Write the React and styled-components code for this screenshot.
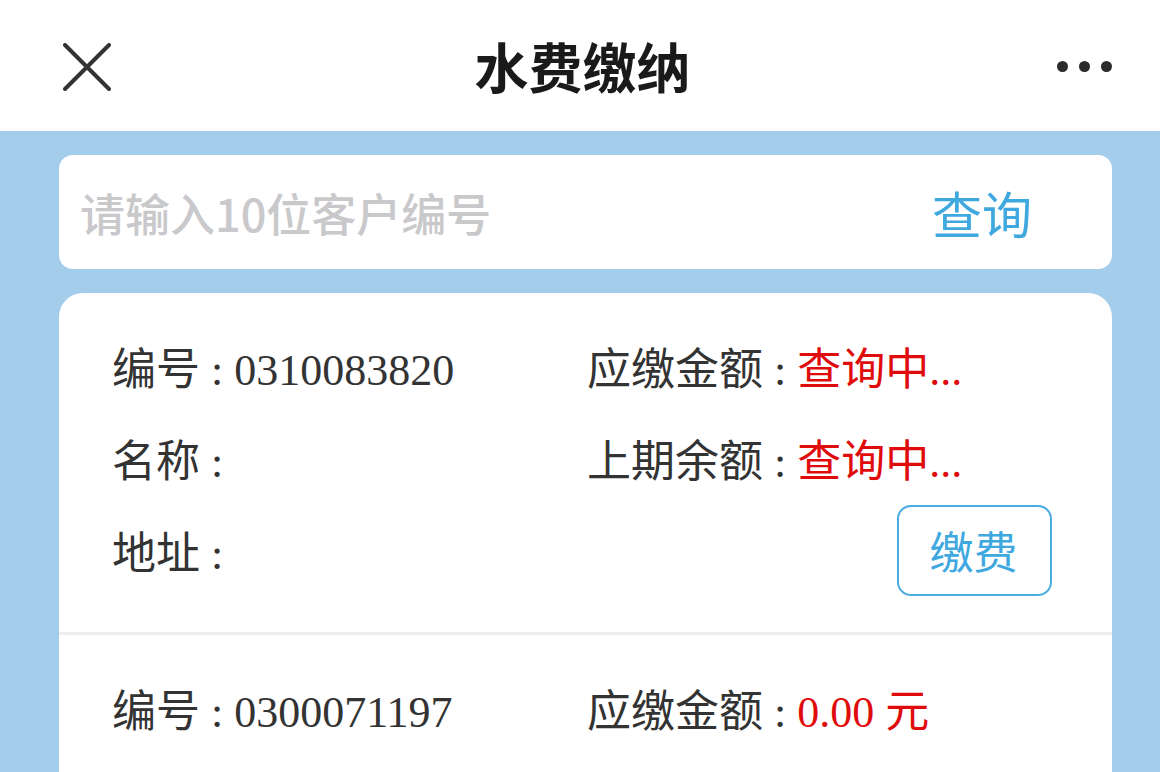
import React from 'react';
import styled, { createGlobalStyle } from 'styled-components';

const GlobalStyle = createGlobalStyle`
  html, body {
    margin: 0;
    padding: 0;
    height: 100%;
    overflow: hidden;
    background: #a4cceb;
  }
  body {
    font-family: "Noto Sans CJK SC", "Noto Sans", sans-serif;
  }
`;

const Page = styled.div`
  width: 1160px;
  height: 772px;
  overflow: hidden;
  background: #a4cceb;
`;

const Header = styled.header`
  height: 131px;
  background: #ffffff;
  display: grid;
  grid-template-columns: 1fr auto 1fr;
  align-items: center;
`;

const CloseButton = styled.button`
  justify-self: start;
  width: 48px;
  height: 48px;
  margin: 2px 0 0 63px;
  padding: 0;
  border: none;
  background: transparent;
  display: flex;
`;

const Title = styled.h1`
  margin: 0 0 0 5px;
  font-size: 54px;
  font-weight: 700;
  color: #1a1a1a;
`;

const More = styled.div`
  justify-self: end;
  display: flex;
  gap: 11px;
  margin: 2px 48px 0 0;
`;

const Dot = styled.span`
  width: 11px;
  height: 11px;
  border-radius: 50%;
  background: #2b2b2b;
`;

const Content = styled.main`
  padding: 24px 48px 0 59px;
  display: flex;
  flex-direction: column;
  gap: 24px;
`;

const SearchCard = styled.div`
  height: 114px;
  background: #ffffff;
  border-radius: 14px;
  display: flex;
  align-items: center;
  padding: 0 80px 0 21px;
`;

const SearchInput = styled.input`
  flex: 1;
  border: none;
  outline: none;
  background: transparent;
  font-family: "Noto Sans CJK SC", sans-serif;
  font-size: 45px;
  font-weight: 500;
  color: #333;
  padding: 0;

  &::placeholder {
    color: #c9c9cc;
  }
`;

const SearchButton = styled.button`
  border: none;
  background: transparent;
  padding: 0;
  font-family: "Noto Sans CJK SC", sans-serif;
  font-size: 50px;
  color: #3ea8df;
`;

const ListCard = styled.section`
  background: #ffffff;
  border-radius: 24px;
`;

const Entry = styled.div`
  display: grid;
  grid-template-columns: 475px 1fr;
  grid-auto-rows: 92px;
  align-items: center;
  padding: 27px 60px 36px 53px;
  border-bottom: 3px solid #eeeeee;
`;

const Field = styled.div`
  font-family: "Liberation Serif", "Noto Sans CJK SC", serif;
  font-size: 44px;
  color: #333333;
  white-space: nowrap;
`;

const Value = styled.span`
  color: ${props => (props.$alert ? '#e00b0b' : '#333333')};
`;

const PayButton = styled.button`
  justify-self: end;
  width: 155px;
  height: 91px;
  border: 2px solid #4aade2;
  border-radius: 14px;
  background: #ffffff;
  font-family: "Noto Sans CJK SC", sans-serif;
  font-size: 44px;
  color: #3ea8df;
  padding: 0 2px 0 0;
`;

const CloseIcon = () => (
  <svg width="48" height="48" viewBox="0 0 48 48">
    <path d="M2 2 L46 46 M46 2 L2 46" stroke="#333" strokeWidth="4" strokeLinecap="round" />
  </svg>
);

const accounts = [
  { id: '0310083820', due: '查询中...', balance: '查询中...' },
  { id: '0300071197', due: '0.00 元', balance: '0.00 元' },
];

const App = () => (
  <Page>
    <GlobalStyle />
    <Header>
      <CloseButton aria-label="关闭">
        <CloseIcon />
      </CloseButton>
      <Title>水费缴纳</Title>
      <More>
        <Dot />
        <Dot />
        <Dot />
      </More>
    </Header>
    <Content>
      <SearchCard>
        <SearchInput placeholder="请输入10位客户编号" />
        <SearchButton>查询</SearchButton>
      </SearchCard>
      <ListCard>
        {accounts.map(acc => (
          <Entry key={acc.id}>
            <Field>编号 : {acc.id}</Field>
            <Field>
              应缴金额 : <Value $alert>{acc.due}</Value>
            </Field>
            <Field>名称 :</Field>
            <Field>
              上期余额 : <Value $alert>{acc.balance}</Value>
            </Field>
            <Field>地址 :</Field>
            <PayButton>缴费</PayButton>
          </Entry>
        ))}
      </ListCard>
    </Content>
  </Page>
);

export default App;
